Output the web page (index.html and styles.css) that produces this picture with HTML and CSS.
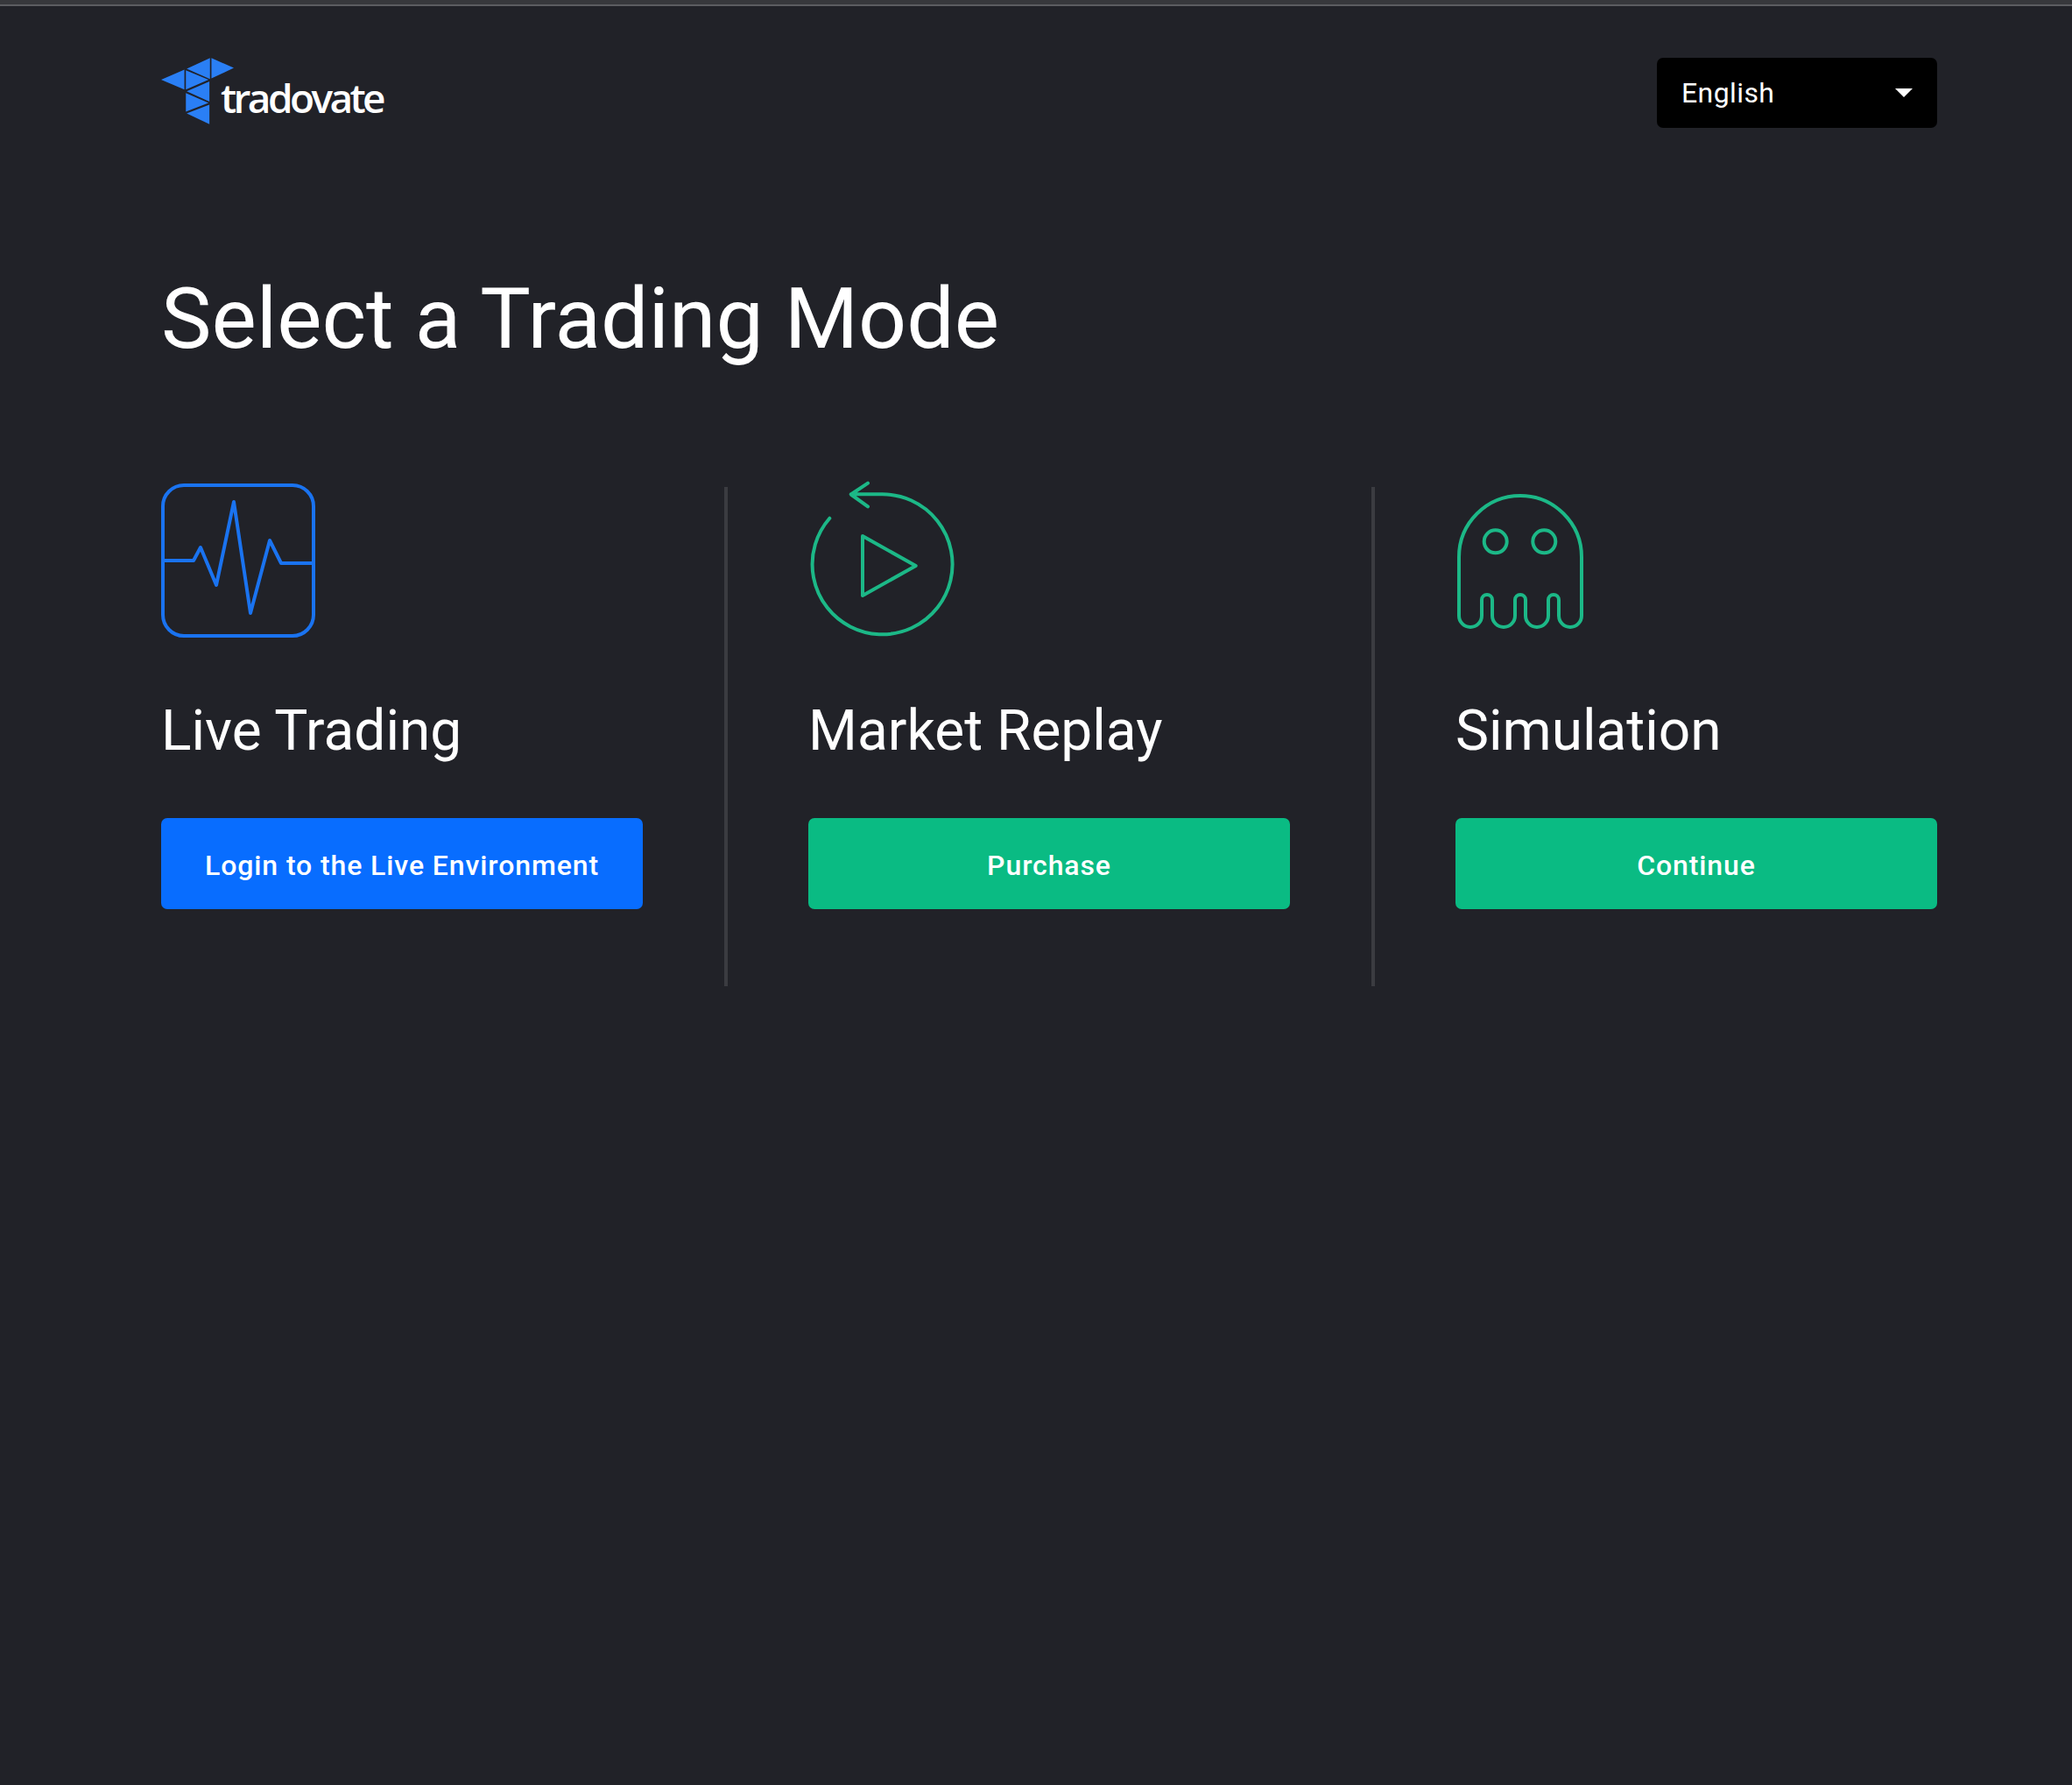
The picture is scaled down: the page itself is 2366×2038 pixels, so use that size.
FILE: index.html
```html
<!DOCTYPE html>
<html lang="en">
<head>
    <meta charset="UTF-8">
    <title>Tradovate - Select a Trading Mode</title>
    <link rel="stylesheet" href="styles.css">
</head>
<body>
    <div class="top-edge"></div>
    <div class="container">
        <div class="header">
            <div class="logo">
                <svg class="logo-mark" viewBox="42 198 250 227">
                    <polygon points="42,272 122,238 122,306"/>
                    <polygon points="130,235 210,198 210,270"/>
                    <polygon points="215,198 292,232 215,268"/>
                    <polygon points="127,240 205,272 127,306"/>
                    <polygon points="208,278 208,348 130,312"/>
                    <polygon points="127,318 205,352 127,382"/>
                    <polygon points="208,358 208,425 130,388"/>
                </svg>
                <span class="logo-text">tradovate</span>
            </div>
            <div class="lang-select">
                <span>English</span>
                <span class="caret"></span>
            </div>
        </div>

        <h1 class="title">Select a Trading Mode</h1>

        <div class="modes">
            <div class="mode">
                <svg class="mode-icon icon-blue" viewBox="0 0 180 184">
                    <rect x="2" y="6" width="172" height="172" rx="24"/>
                    <polyline points="2,92 37,92 45,77 63,120 83,25 102,152 124,69 137,95 174,95"/>
                </svg>
                <h2>Live Trading</h2>
                <button class="btn btn-blue">Login to the Live Environment</button>
            </div>
            <div class="mode">
                <svg class="mode-icon icon-green" viewBox="0 0 180 184">
                    <path d="M24.3 43.7A80 80 0 1 0 84 16.3H48.7M68 3.7L48.7 16.5L68 30.3"/>
                    <polygon points="62,64 122.7,98 62,132"/>
                </svg>
                <h2>Market Replay</h2>
                <button class="btn btn-green">Purchase</button>
            </div>
            <div class="mode">
                <svg class="mode-icon icon-green" viewBox="0 0 180 184">
                    <path d="M4 88A70 70 0 0 1 144 88V155A13 13 0 0 1 118 155V137A6 6 0 0 0 106 137V155A13 13 0 0 1 80 155V137A6 6 0 0 0 68 137V155A13 13 0 0 1 42 155V137A6 6 0 0 0 30 137V155A13 13 0 0 1 4 155Z"/>
                    <circle cx="45.7" cy="70.3" r="13"/>
                    <circle cx="101.3" cy="70.3" r="13"/>
                </svg>
                <h2>Simulation</h2>
                <button class="btn btn-green">Continue</button>
            </div>
        </div>
    </div>
</body>
</html>
```

FILE: styles.css
```css
html, body {
    margin: 0;
    padding: 0;
    height: 100%;
}
body {
    font-family: 'Roboto', sans-serif;
    background-color: #212228;
    color: white;
}
.top-edge {
    height: 5px;
    background-color: #37383c;
    border-bottom: 2px solid #5c5d61;
}
.container {
    padding: 59px 154px 0 184px;
}
.header {
    display: flex;
    justify-content: space-between;
    align-items: flex-start;
}
.logo {
    display: flex;
    align-items: flex-start;
}
.logo-mark {
    width: 83px;
    height: 76px;
    fill: #2a7ff5;
}
.logo-text {
    font-family: 'Open Sans', sans-serif;
    font-size: 46px;
    font-weight: 600;
    line-height: 62px;
    letter-spacing: -3.6px;
    margin: 14px 0 0 -15px;
}
.lang-select {
    width: 320px;
    height: 80px;
    box-sizing: border-box;
    padding: 0 28px;
    background-color: black;
    border-radius: 7px;
    display: flex;
    justify-content: space-between;
    align-items: center;
    font-size: 32px;
    letter-spacing: 0.4px;
}
.caret {
    border-left: 10px solid transparent;
    border-right: 10px solid transparent;
    border-top: 10px solid white;
}
.title {
    font-size: 96.7px;
    font-weight: 400;
    line-height: 112px;
    margin: 162px 0 0 0;
}
.modes {
    display: grid;
    grid-template-columns: repeat(3, 550px);
    gap: 0 189px;
    margin-top: 128px;
}
.mode {
    position: relative;
    height: 578px;
}
.mode + .mode::before {
    content: "";
    position: absolute;
    left: -96px;
    top: 8px;
    bottom: 0;
    width: 4px;
    background-color: #3b3c41;
}
.mode-icon {
    display: block;
    width: 180px;
    height: 184px;
    fill: none;
    stroke-width: 4;
    stroke-linecap: round;
    stroke-linejoin: round;
}
.icon-blue {
    stroke: #1a73f0;
}
.icon-green {
    stroke: #1cb887;
}
.mode h2 {
    font-size: 64px;
    font-weight: 400;
    line-height: 76px;
    margin: 65px 0 0 0;
}
.btn {
    display: block;
    width: 100%;
    height: 104px;
    margin-top: 61px;
    padding: 3px 0 0 0;
    border: none;
    border-radius: 7px;
    color: white;
    font-family: 'Roboto', sans-serif;
    font-size: 32px;
    font-weight: 500;
    letter-spacing: 0.9px;
    cursor: pointer;
}
.btn-blue {
    background-color: #086dff;
}
.btn-green {
    background-color: #0abb83;
}
```
